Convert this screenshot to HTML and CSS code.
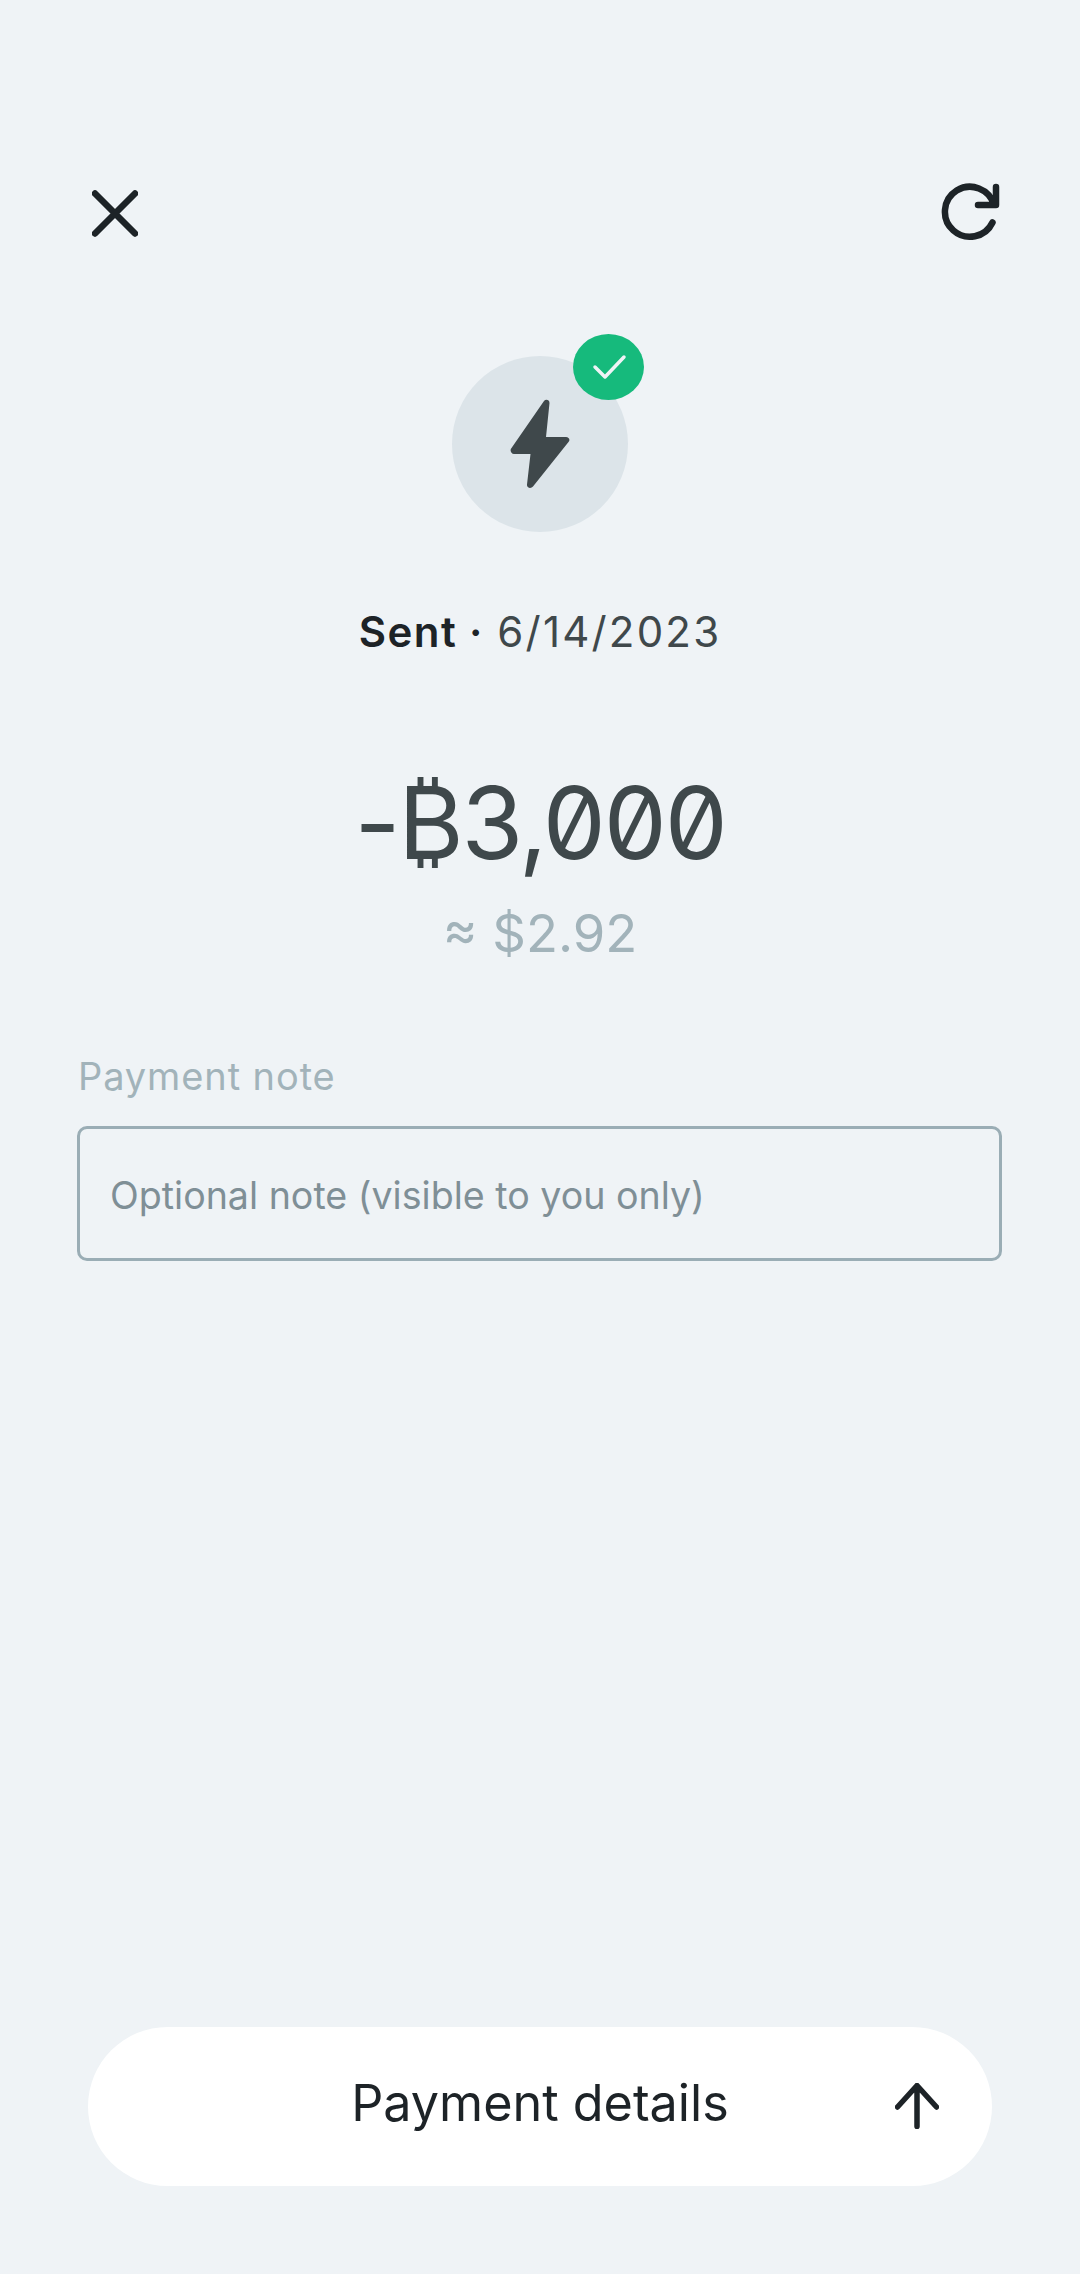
FILE: index.html
```html
<!DOCTYPE html>
<html lang="en">
<head>
    <meta charset="UTF-8">
    <meta name="viewport" content="width=device-width, initial-scale=1.0">
    <title>Payment</title>
    <link rel="stylesheet" href="styles.css">
</head>
<body>
    <div class="page">
        <div class="top-bar">
            <svg class="icon-close" viewBox="0 0 46 47" width="46" height="47">
                <path d="M3 3.500L43 43.500M43 3.500L3 43.500"/>
            </svg>
            <svg class="icon-refresh" viewBox="0 0 60 60" width="60" height="60">
                <path d="M52.500 39.500A25 25 0 1 1 54 22M56 4V22H38"/>
            </svg>
        </div>

        <div class="status-icon">
            <svg class="icon-bolt" viewBox="0 0 60 90" width="60" height="90">
                <path d="M34 2C35.500 0 39.500 0.500 39.500 4L36 38H56C59 38 60.500 41 58.500 43L23 87.500C21 90 16.500 89 17 85.500L20.500 55H4C1 55 -0.500 51 1.500 49Z"/>
            </svg>
            <div class="badge">
                <svg viewBox="0 0 36 28" width="36" height="28">
                    <path d="M4 14L14 24L33 4"/>
                </svg>
            </div>
        </div>

        <p class="summary"><strong>Sent ·</strong> 6/14/2023</p>

        <p class="amount">-₿3,000</p>
        <p class="fiat">≈ $2.92</p>

        <div class="note">
            <div class="note-label">Payment note</div>
            <div class="note-input">Optional note (visible to you only)</div>
        </div>

        <div class="details-btn">
            <span class="details-text">Payment details</span>
            <svg class="icon-up" viewBox="0 0 44 46" width="44" height="46">
                <path d="M22 43.500V3M2.500 24L22 2.500L41.500 24"/>
            </svg>
        </div>
    </div>
</body>
</html>
```

FILE: styles.css
```css
body {
    margin: 0;
    background-color: #eff3f6;
    font-family: Inter, "Noto Sans", sans-serif;
}
p {
    margin: 0;
}
.page {
    height: 2274px;
    display: flex;
    flex-direction: column;
    align-items: center;
    overflow: hidden;
}
.top-bar {
    align-self: stretch;
    display: flex;
    justify-content: space-between;
    align-items: center;
    padding: 183px 80px 0 92px;
    height: 60px;
}
.icon-close path, .icon-refresh path {
    fill: none;
    stroke: #1d2327;
    stroke-width: 6.500;
    stroke-linecap: round;
    stroke-linejoin: round;
}
.icon-up path {
    fill: none;
    stroke: #1d2327;
    stroke-width: 5.500;
    stroke-linecap: round;
    stroke-linejoin: round;
}
.status-icon {
    position: relative;
    width: 176px;
    height: 176px;
    margin-top: 113px;
    border-radius: 50%;
    background-color: #dce4e9;
    display: flex;
    align-items: center;
    justify-content: center;
}
.icon-bolt path {
    fill: #3f484b;
}
.badge {
    position: absolute;
    top: -22px;
    right: -16px;
    width: 71px;
    height: 66px;
    border-radius: 50%;
    background-color: #16ba7c;
    display: flex;
    align-items: center;
    justify-content: center;
}
.badge path {
    fill: none;
    stroke: #eff3f6;
    stroke-width: 3.500;
    stroke-linecap: round;
    stroke-linejoin: round;
}
.summary {
    margin-top: 74px;
    font-size: 42px;
    line-height: 52px;
    letter-spacing: 2.200px;
    word-spacing: -0.500px;
    color: #3f484b;
}
.summary strong {
    font-weight: 600;
    letter-spacing: 1.500px;
    color: #1d2327;
}
.amount {
    margin-top: 103px;
    font-size: 100px;
    line-height: 124px;
    letter-spacing: -2.200px;
    color: #3f484b;
    font-feature-settings: "zero";
}
.fiat {
    margin-top: 15px;
    font-size: 52.500px;
    line-height: 66px;
    color: #a2b3ba;
}
.note {
    align-self: stretch;
    margin-top: 87px;
    padding: 0 78px 0 77px;
}
.note-label {
    padding-left: 1px;
    font-size: 38px;
    line-height: 46px;
    letter-spacing: 0.900px;
    color: #a2b3ba;
}
.note-input {
    margin-top: 27px;
    height: 135px;
    box-sizing: border-box;
    border: 3px solid #9aadb5;
    border-radius: 10px;
    padding: 3px 0 0 30px;
    display: flex;
    align-items: center;
    font-size: 37.600px;
    color: #7f8f96;
}
.details-btn {
    position: relative;
    margin-top: auto;
    margin-bottom: 88px;
    width: 904px;
    height: 159px;
    border-radius: 80px;
    background-color: #fff;
    display: flex;
    align-items: center;
    justify-content: center;
    font-size: 50.300px;
    color: #1d2327;
}
.details-text {
    margin-bottom: 8px;
}
.icon-up {
    position: absolute;
    right: 53px;
    top: 56px;
}
```
